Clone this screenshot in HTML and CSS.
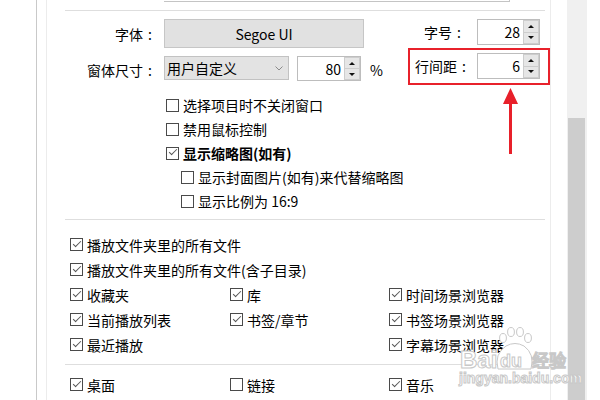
FILE: index.html
```html
<!DOCTYPE html>
<html lang="zh-CN">
<head>
<meta charset="utf-8">
<title>设置</title>
<link rel="stylesheet" href="styles.css">
</head>
<body>
<div class="screen">
  <div class="gutter"></div>
  <div class="frame">
    <div class="panel">
      <div class="topbox"></div>
      <div class="sep sep-top"></div>

      <div class="form">
        <div class="form-left">
          <div class="row row-a">
            <div class="label w87">字体<span class="colon">:</span></div>
            <div class="font-btn">Segoe UI</div>
          </div>
          <div class="row row-b">
            <div class="label w87 tall">窗体尺寸<span class="colon">:</span></div>
            <div class="select">
              <span>用户自定义</span>
              <svg class="chev" width="8" height="5" viewBox="0 0 8 5"><polyline points="0.5,0.5 4,4 7.5,0.5" fill="none" stroke="#8a8a8a" stroke-width="1"/></svg>
            </div>
            <div class="spinner s80">
              <div class="spin-field">80</div>
              <div class="spin-btns"><div class="spin-up"></div><div class="spin-down"></div></div>
            </div>
            <div class="pct">%</div>
          </div>
        </div>
        <div class="form-right">
          <div class="row row-c">
            <div class="label w53">字号<span class="colon">:</span></div>
            <div class="spinner">
              <div class="spin-field">28</div>
              <div class="spin-btns"><div class="spin-up"></div><div class="spin-down"></div></div>
            </div>
          </div>
          <div class="row row-d">
            <div class="label w62">行间距<span class="colon">:</span></div>
            <div class="spinner">
              <div class="spin-field">6</div>
              <div class="spin-btns"><div class="spin-up"></div><div class="spin-down"></div></div>
            </div>
          </div>
        </div>
      </div>

      <div class="checks1">
        <div class="cbrow"><span class="cb"></span>选择项目时不关闭窗口</div>
        <div class="cbrow"><span class="cb"></span>禁用鼠标控制</div>
        <div class="cbrow bold"><span class="cb on"></span>显示缩略图(如有)</div>
        <div class="cbrow sub"><span class="cb"></span>显示封面图片(如有)来代替缩略图</div>
        <div class="cbrow sub"><span class="cb"></span>显示比例为 16:9</div>
      </div>

      <div class="sep sep-mid"></div>

      <div class="checks2">
        <div class="cbrow span3"><span class="cb on"></span>播放文件夹里的所有文件</div>
        <div class="cbrow span3"><span class="cb on"></span>播放文件夹里的所有文件(含子目录)</div>
        <div class="cbrow"><span class="cb on"></span>收藏夹</div>
        <div class="cbrow"><span class="cb on"></span>库</div>
        <div class="cbrow"><span class="cb on"></span>时间场景浏览器</div>
        <div class="cbrow"><span class="cb on"></span>当前播放列表</div>
        <div class="cbrow"><span class="cb on"></span>书签/章节</div>
        <div class="cbrow"><span class="cb on"></span>书签场景浏览器</div>
        <div class="cbrow"><span class="cb on"></span>最近播放</div>
        <div class="cbrow"></div>
        <div class="cbrow"><span class="cb on"></span>字幕场景浏览器</div>
      </div>

      <div class="sep sep-low"></div>

      <div class="checks2 checks3">
        <div class="cbrow"><span class="cb on"></span>桌面</div>
        <div class="cbrow"><span class="cb"></span>链接</div>
        <div class="cbrow"><span class="cb on"></span>音乐</div>
      </div>
    </div>
  </div>
  <div class="gap"></div>
  <div class="scrollbar"><div class="thumb"></div></div>
  <div class="rgutter"></div>

  <svg class="arrow" width="18" height="70" viewBox="0 0 18 70">
    <polygon points="8.5,2 1,18 16,18" fill="#e8202a"/>
    <rect x="7" y="17" width="3" height="51" fill="#e8202a"/>
  </svg>

  <svg class="wm" width="130" height="70" viewBox="0 0 130 70">
    <g fill="#ffffff" stroke="#c8c8c8" stroke-width="1">
      <ellipse cx="48" cy="14" rx="3.4" ry="4.5"/>
      <ellipse cx="56" cy="8" rx="3.4" ry="4.5"/>
      <ellipse cx="65" cy="8" rx="3.4" ry="4.5"/>
      <ellipse cx="73" cy="14" rx="3.4" ry="4.5"/>
      <path d="M43 45 Q39 30 51 22 Q60 17 69 22 Q80 30 76 45 Z"/>
      <text x="5" y="44" class="wm-big">Bai</text>
      <text x="45" y="43" class="wm-du">du</text>
      <text x="77" y="43" class="wm-jy">经验</text>
      <text x="4" y="59" class="wm-url">jingyan.baidu.com</text>
    </g>
  </svg>
</div>
</body>
</html>
```

FILE: styles.css
```css
body {
  margin: 0;
  font-family: "Noto Sans CJK SC", "Noto Sans", sans-serif;
  font-size: 14px;
  color: #000;
  background: #fff;
}

.screen {
  position: relative;
  display: flex;
  width: 600px;
  height: 400px;
  overflow: hidden;
  background: #fff;
}

.gutter { width: 36px; flex: none; }

.frame {
  flex: none;
  display: flex;
  border-left: 1px solid #c9c9c9;
  padding-left: 9px;
}

.panel {
  width: 505px;
  box-sizing: border-box;
  border-left: 1px solid #ececec;
  border-right: 1px solid #ececec;
  padding: 0 5px 0 18px;
}

.gap { width: 16px; flex: none; }

.scrollbar {
  width: 20px;
  flex: none;
  box-sizing: border-box;
  background: #f0f0f0;
  padding: 118px 2px 0 1px;
  display: flex;
  flex-direction: column;
}

.thumb { flex: 1; background: #cdcdcd; }

.rgutter { width: 13px; flex: none; }

.topbox {
  margin-left: 99px;
  width: 345px;
  height: 1px;
  border-bottom: 1px solid #c4c4c4;
  border-right: 1px solid #c4c4c4;
}

.sep { height: 1px; background: #dedede; }
.sep-top { margin-top: 8px; }
.sep-mid { margin-top: 6px; }
.sep-low { margin-top: 7px; }

.form {
  display: flex;
  margin-top: 8px;
}

.form-left { width: 343px; flex: none; }
.form-right { width: 142px; flex: none; }

.row { display: flex; align-items: center; }
.row-a { height: 29px; }
.row-b { margin-top: 8px; align-items: flex-start; }
.row-c { height: 26px; }
.row-d {
  margin-top: 3px;
  border: 2px solid #e8212b;
  padding: 3px 8px 4px 5px;
}

.label {
  flex: none;
  text-align: right;
  white-space: nowrap;
}
.label.tall { line-height: 28px; }
.colon { padding-left: 5px; }
.w87 { width: 87px; margin-right: 12px; }
.w53 { width: 53px; margin-right: 16px; }
.w62 { width: 62px; text-align: left; }

.font-btn {
  width: 200px;
  height: 29px;
  box-sizing: border-box;
  background: #e1e1e1;
  border: 1px solid #c6c6c6;
  display: flex;
  align-items: center;
  justify-content: center;
}

.select {
  width: 125px;
  height: 24px;
  box-sizing: border-box;
  background: #e3e3e3;
  border: 1px solid #c2c2c2;
  display: flex;
  align-items: center;
  justify-content: space-between;
  padding: 0 5px 0 2px;
  flex: none;
}

.chev { display: block; }

.spinner {
  flex: none;
  display: flex;
  width: 63px;
  height: 26px;
  box-sizing: border-box;
  border: 1px solid #bdbdbd;
  background: #fff;
}
.spinner.s80 { margin-left: 8px; width: 64px; height: 25px; }

.spin-field {
  flex: 1;
  text-align: right;
  padding-right: 3px;
  display: flex;
  align-items: center;
  justify-content: flex-end;
}

.spin-btns {
  width: 16px;
  display: flex;
  flex-direction: column;
}

.spin-up, .spin-down {
  flex: 1;
  background: #e6e6e6;
  border: 1px solid #cdcdcd;
  display: flex;
  align-items: center;
  justify-content: center;
}
.spin-down { border-top: none; }

.spin-up::after {
  content: "";
  border-left: 3px solid transparent;
  border-right: 3px solid transparent;
  border-bottom: 3px solid #111;
}
.spin-down::after {
  content: "";
  border-left: 3px solid transparent;
  border-right: 3px solid transparent;
  border-top: 3px solid #111;
}

.pct { margin-left: 9px; line-height: 28px; }

.checks1 {
  margin-top: 8px;
  padding-left: 101px;
}

.cbrow {
  display: flex;
  align-items: center;
  height: 24px;
  white-space: nowrap;
}
.cbrow.sub { padding-left: 15px; }
.cbrow.bold { font-weight: bold; }

.cb {
  position: relative;
  flex: none;
  width: 13px;
  height: 13px;
  box-sizing: border-box;
  border: 1px solid #4a4a4a;
  background: #fff;
  margin-right: 4px;
}
.cb.on::after {
  content: "";
  position: absolute;
  left: 1.5px;
  top: 1.5px;
  width: 7px;
  height: 3px;
  border-left: 1px solid #555;
  border-bottom: 1px solid #555;
  transform: rotate(-45deg);
}

.checks2 {
  margin-top: 12px;
  padding-left: 5px;
  display: grid;
  grid-template-columns: 160px 159px 1fr;
  grid-auto-rows: 25px;
}
.checks2 .cbrow { height: 25px; }
.checks3 { margin-top: 7px; }
.span3 { grid-column: 1 / -1; }

.arrow {
  position: absolute;
  left: 502px;
  top: 86px;
}

.wm {
  position: absolute;
  left: 455px;
  top: 324px;
}
.wm text { font-family: "Liberation Sans", Arial, sans-serif; font-weight: bold; }
.wm-big { font-size: 24px; }
.wm-du { font-size: 18px; }
.wm-jy { font-family: "Noto Sans CJK SC", sans-serif; font-size: 17px; }
.wm-url { font-size: 14px; font-weight: normal; }
```
